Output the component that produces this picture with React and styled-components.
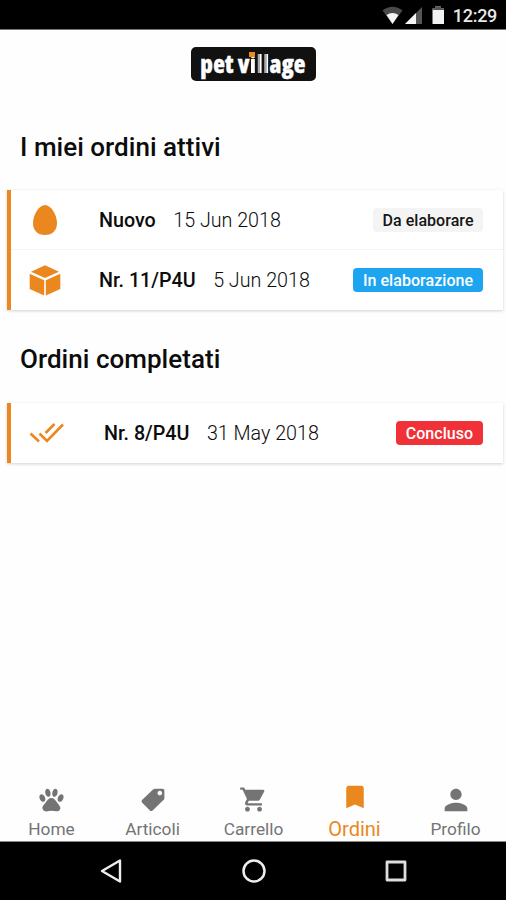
import React from "react";
import styled, { createGlobalStyle } from "styled-components";
import { MdShoppingCart, MdPerson, MdBookmark } from "react-icons/md";

const ORANGE = "#ea881f";

const GlobalStyle = createGlobalStyle`
  * { box-sizing: border-box; }
  body { margin: 0; background: #fff; font-family: Roboto, sans-serif; color: #0c0c0c; }
  svg { display: block; flex: none; }
`;

const Screen = styled.div`
  display: flex;
  flex-direction: column;
  width: 506px;
  height: 900px;
  overflow: hidden;
  background: #fefefe;
`;

const StatusBar = styled.div`
  display: flex;
  flex: none;
  justify-content: flex-end;
  align-items: center;
  height: 30px;
  padding: 2px 9px 0 0;
  background: #000;
  border-bottom: 1px solid #777;
`;

const Clock = styled.span`
  margin-left: 7px;
  color: #e8e8e8;
  font-size: 18px;
  font-weight: 500;
  line-height: 28px;
  letter-spacing: -0.3px;
`;

const Header = styled.header`
  display: flex;
  flex: none;
  justify-content: center;
  height: 70px;
  padding-top: 17px;
`;

const LogoPlate = styled.div`
  position: relative;
  display: flex;
  justify-content: center;
  gap: 4px;
  width: 125px;
  height: 34px;
  border-radius: 5px;
  background: #111;
`;

const Main = styled.main`
  flex: 1;
`;

const SectionTitle = styled.h2`
  margin: 0;
  padding: ${(p) => p.$top}px 0 ${(p) => p.$bottom}px 20px;
  font-size: 26px;
  line-height: 30px;
  font-weight: 500;
  letter-spacing: 0.03px;
`;

const Card = styled.section`
  margin: 0 3px 0 7px;
  border-left: 4px solid ${ORANGE};
  background: #fff;
  box-shadow: 0 1px 3px rgba(0, 0, 0, 0.18);
`;

const OrderRow = styled.div`
  display: flex;
  align-items: center;
  height: 60px;
  padding-right: 20px;
  & + & { box-shadow: 0 -1px 0 #f4f4f4; }
`;

const IconSlot = styled.div`
  display: flex;
  flex: none;
  width: ${(p) => p.$width}px;
  padding-left: 18px;
`;

const OrderName = styled.span`
  padding-top: 2px;
  font-size: 19.7px;
  line-height: 28px;
  font-weight: 500;
`;

const OrderDate = styled.span`
  margin-left: 17.5px;
  padding-top: 2px;
  font-size: 19.7px;
  line-height: 28px;
  font-weight: 300;
`;

const Badge = styled.span`
  width: ${(p) => p.$width}px;
  height: 24px;
  margin-left: auto;
  border-radius: 4px;
  background: ${(p) => p.$bg};
  color: ${(p) => p.$color};
  font-size: 16px;
  line-height: 25px;
  font-weight: 500;
  letter-spacing: 0.05px;
  text-align: center;
  white-space: nowrap;
`;

const TabBar = styled.nav`
  display: grid;
  flex: none;
  grid-template-columns: repeat(5, 101px);
  padding-left: 1px;
  height: 67px;
  border-bottom: 1px solid #888;
`;

const Tab = styled.div`
  display: flex;
  flex-direction: column;
  align-items: center;
  color: ${(p) => (p.$active ? ORANGE : "#747474")};
`;

const TabIcon = styled.div`
  display: flex;
  align-items: center;
  justify-content: center;
  height: 44px;
  padding-top: ${(p) => (p.$active ? 0 : 5)}px;
`;

const TabLabel = styled.span`
  font-size: ${(p) => (p.$active ? 20 : 17.3)}px;
  line-height: 20px;
  font-weight: 400;
`;

const SystemBar = styled.div`
  display: flex;
  flex: none;
  align-items: center;
  justify-content: center;
  gap: 117.5px;
  height: 58px;
  padding-left: 1px;
  background: #000;
`;

const StatusIcons = () => (
  <svg width="64" height="24" viewBox="0 0 64 24">
    <path d="M0.500 6.500Q10.500 -1 20.500 6.500L10.500 20Z" fill="#4a4a4a" />
    <path d="M4.500 11Q10.500 6.800 16.500 11L10.500 20Z" fill="#f5f5f5" />
    <path d="M23 20L40 3V20Z" fill="#555" />
    <path d="M23 20L34 9V20Z" fill="#f5f5f5" />
    <path d="M50.500 4.500H53V2.500H59V4.500H62V20H50.500Z" fill="#f2f2f2" />
    <path d="M50.500 4.500H53V2.500H59V4.500H62V6H50.500Z" fill="#555" />
  </svg>
);

const LogoWord = styled.span`
  font-family: "Open Sans", sans-serif;
  font-size: 24px;
  font-weight: 800;
  font-stretch: 75%;
  line-height: 33px;
  letter-spacing: 0.25px;
  -webkit-text-stroke: 0.4px #fff;
  color: #fff;
`;

const Stripes = styled.span`
  -webkit-text-stroke: 0;
  background: linear-gradient(90deg, #fff 0 32%, #aaa 34% 48%, #fff 50% 64%, #aaa 68% 82%, #fff 84% 100%);
  background-clip: text;
  -webkit-background-clip: text;
  color: transparent;
`;

const LogoDot = styled.i`
  position: absolute;
  left: 58px;
  top: 5px;
  width: 6px;
  height: 5px;
  background: #f08a1c;
`;

const Logo = () => (
  <LogoPlate>
    <LogoWord>pet</LogoWord>
    <LogoWord>v<Stripes>ill</Stripes>age</LogoWord>
    <LogoDot />
  </LogoPlate>
);

const EggIcon = () => (
  <svg width="32" height="32" viewBox="0 0 32 32" fill={ORANGE}>
    <path d="M16 1C22 1 28 11 28 19C28 26.500 23.500 31 16 31C8.500 31 4 26.500 4 19C4 11 10 1 16 1Z" />
  </svg>
);

const BoxIcon = () => (
  <svg width="32" height="31" viewBox="0.500 0.500 32 31" fill={ORANGE}>
    <path d="M16.500 0.700L30.500 7.200L16.500 13.600L2.500 7.200Z" />
    <path d="M1.200 9.300L15.700 15.800V31L1.200 24.500Z" />
    <path d="M31.800 9.300L17.300 15.800V31L31.800 24.500Z" />
  </svg>
);

const ChecksIcon = () => (
  <svg width="36" height="32" viewBox="0 0 36 32" fill="none" stroke={ORANGE} strokeWidth="2.600">
    <path d="M1.500 16.500L10 24.500" />
    <path d="M10.500 16.500L18 24L34 7.500" />
    <path d="M16.500 16L25.500 7" />
  </svg>
);

const PawIcon = () => (
  <svg width="29" height="30" viewBox="0 0 24 24" preserveAspectRatio="none" fill="currentColor">
    <path d="M8.350 3C9.530 2.830 10.780 4.120 11.140 5.900C11.500 7.670 10.850 9.250 9.670 9.430C8.500 9.610 7.240 8.320 6.870 6.540C6.500 4.770 7.170 3.190 8.350 3M15.500 3C16.690 3.190 17.350 4.770 17 6.540C16.620 8.320 15.370 9.610 14.190 9.430C13 9.250 12.350 7.670 12.720 5.900C13.080 4.120 14.330 2.830 15.500 3M3 7.600C4.140 7.110 5.690 8 6.500 9.550C7.260 11.130 7 12.790 5.870 13.280C4.740 13.770 3.200 12.890 2.410 11.320C1.620 9.750 1.900 8.080 3 7.600M21 7.600C22.100 8.080 22.380 9.750 21.590 11.320C20.800 12.890 19.260 13.770 18.130 13.280C17 12.790 16.740 11.130 17.500 9.550C18.310 8 19.860 7.110 21 7.600M19.330 18.380C19.370 19.320 18.650 20.360 17.790 20.750C16 21.570 13.880 20.600 11.890 20.600C9.900 20.600 7.760 21.640 6 20.750C5 20.260 4.310 18.960 4.440 17.880C4.620 16.390 6.200 15.200 7.200 13.900C8.600 12 9.880 10.440 11.890 10.440C13.890 10.440 15.200 12 16.600 13.900C17.600 15.200 19.260 16.750 19.330 18.380Z" />
  </svg>
);

const TagIcon = () => (
  <svg width="24" height="24" viewBox="0 0 24 24" fill="currentColor" fillRule="evenodd">
    <path d="M12.300 1.300Q13 0.700 14 0.700H21.500Q23.400 0.700 23.400 2.600V10Q23.400 11 22.700 11.700L11.600 22.500Q10.200 23.700 8.900 22.500L1 14.600Q0 13.300 1 12ZM18.800 2.800A2.300 2.300 0 1 0 18.810 2.800Z" />
  </svg>
);

const tabs = [
  { label: "Home", icon: <PawIcon /> },
  { label: "Articoli", icon: <TagIcon /> },
  { label: "Carrello", icon: <MdShoppingCart size={29} /> },
  { label: "Ordini", icon: <MdBookmark size={30} />, active: true },
  { label: "Profilo", icon: <MdPerson size={34} /> },
];

const activeOrders = [
  { name: "Nuovo", date: "15 Jun 2018", icon: <EggIcon />, status: "Da elaborare", bg: "#f4f4f4", color: "#151515", width: 110 },
  { name: "Nr. 11/P4U", date: "5 Jun 2018", icon: <BoxIcon />, status: "In elaborazione", bg: "#1da5f2", color: "#fff", width: 130 },
];

const doneOrders = [
  { name: "Nr. 8/P4U", date: "31 May 2018", icon: <ChecksIcon />, status: "Concluso", bg: "#f03238", color: "#fff", width: 87, slot: 93 },
];

const Orders = ({ items }) => (
  <Card>
    {items.map((o) => (
      <OrderRow key={o.name}>
        <IconSlot $width={o.slot || 88}>{o.icon}</IconSlot>
        <OrderName>{o.name}</OrderName>
        <OrderDate>{o.date}</OrderDate>
        <Badge $bg={o.bg} $color={o.color} $width={o.width}>{o.status}</Badge>
      </OrderRow>
    ))}
  </Card>
);

export default function App() {
  return (
    <Screen>
      <GlobalStyle />
      <StatusBar>
        <StatusIcons />
        <Clock>12:29</Clock>
      </StatusBar>
      <Header>
        <Logo />
      </Header>
      <Main>
        <SectionTitle $top={32} $bottom={28}>I miei ordini attivi</SectionTitle>
        <Orders items={activeOrders} />
        <SectionTitle $top={34} $bottom={29}>Ordini completati</SectionTitle>
        <Orders items={doneOrders} />
      </Main>
      <TabBar>
        {tabs.map((t) => (
          <Tab key={t.label} $active={t.active}>
            <TabIcon $active={t.active}>{t.icon}</TabIcon>
            <TabLabel $active={t.active}>{t.label}</TabLabel>
          </Tab>
        ))}
      </TabBar>
      <SystemBar>
        <svg width="24" height="26" viewBox="0 0 24 26" fill="none" stroke="#eee" strokeWidth="2.400" strokeLinejoin="round">
          <path d="M21 2.500V23.500L3 13Z" />
        </svg>
        <svg width="26" height="26" viewBox="0 0 26 26" fill="none" stroke="#eee" strokeWidth="2.500">
          <circle cx="13" cy="13" r="10.500" />
        </svg>
        <svg width="24" height="24" viewBox="0 0 24 24" fill="none" stroke="#ddd" strokeWidth="2.800" strokeLinejoin="round">
          <rect x="3" y="3" width="18" height="18" />
        </svg>
      </SystemBar>
    </Screen>
  );
}
